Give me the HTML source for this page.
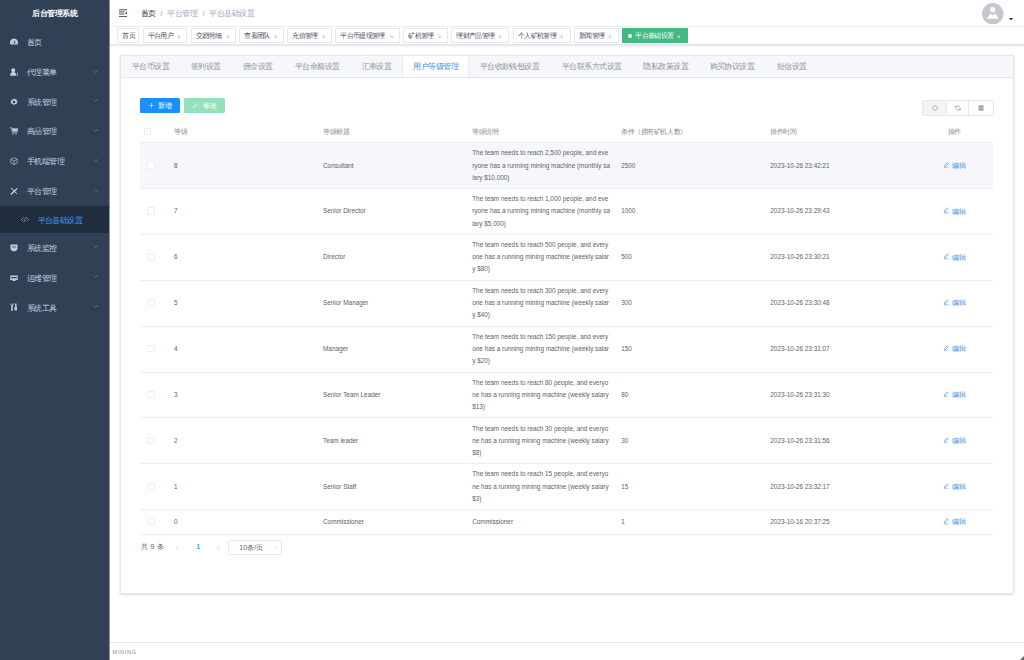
<!DOCTYPE html>
<html><head><meta charset="utf-8">
<style>
*{box-sizing:border-box;margin:0;padding:0}
html,body{width:1024px;height:660px;overflow:hidden;background:#fff}
body{font-family:"Liberation Sans",sans-serif;position:relative}
.abs{position:absolute;white-space:nowrap;line-height:0}
#side{position:absolute;left:0;top:0;width:109px;height:660px;background:#304156;box-shadow:1px 0 0 rgba(48,65,86,.55)}
#side .title{position:absolute;left:0;width:109.5px;top:5.5px;height:15px;line-height:15px;text-align:center;color:#fff;font-weight:bold;font-size:8px;letter-spacing:-0.53px}
.mi{position:absolute;left:0;width:109.5px;height:29.87px;line-height:29.87px;color:#ccd5e0;font-size:8px;letter-spacing:-0.53px}
.mi .t{position:absolute;left:26.7px;top:0.6px}
.mi .ic{position:absolute;left:10px;top:10.4px;width:8px;height:8px;line-height:0}
.mi .ar{position:absolute;left:92.8px;top:12.1px;width:5px;height:3px;line-height:0}
.sub{position:absolute;left:0;width:109px;top:205.7px;height:27.3px;background:#1f2d3d;color:#409eff;font-size:8px;letter-spacing:-0.53px;line-height:27.3px}
.sub .sic{position:absolute;left:21.3px;top:11.3px;line-height:0}
.sub .st{position:absolute;left:37.5px;top:0.9px}
#nav{position:absolute;left:109.5px;top:0;width:914.5px;height:27px;background:#fff;border-bottom:1px solid #f0f1f3;box-shadow:0 1px 2px rgba(0,21,41,.12)}
#tags{position:absolute;left:109.5px;top:26.7px;width:914.5px;height:18.1px;background:#fff;border-bottom:1px solid #e3e5e8;box-shadow:0 1px 2px 0 rgba(0,0,0,.10),0 0 2px 0 rgba(0,0,0,.04)}
.bc{position:absolute;top:7.6px;height:12px;line-height:12px;font-size:8px;letter-spacing:-0.53px;color:#97a8be;white-space:nowrap}
.bc.sep{color:#c0c4cc;font-weight:bold}
.tag{position:absolute;top:28.3px;height:14.3px;line-height:13px;border:1px solid #e8eaee;color:#495060;background:#fff;font-size:6.9px;letter-spacing:-0.65px;padding-left:4px;white-space:nowrap}
.tag .x{position:absolute;right:6.3px;top:5.4px;line-height:0}
.tag.act{background:#42b983;border-color:#42b983;color:#fff}
.tag .dot{position:absolute;left:4.5px;top:4.8px;width:4.3px;height:4.3px;border-radius:50%;background:#fff}
#card{position:absolute;left:120.3px;top:55.2px;width:893.5px;height:538.8px;background:#fff;border:1px solid #e4e7ed;box-shadow:0 1px 2px 0 rgba(0,0,0,.12),0 0 3px 0 rgba(0,0,0,.04)}
#tabh{position:absolute;left:0;top:0;width:100%;height:21.4px;background:#f5f7fa;border-bottom:0.55px solid #e4e7ed}
.tab{position:absolute;top:56.6px;height:20.6px;line-height:20.6px;font-size:8px;letter-spacing:-0.53px;color:#909399;white-space:nowrap}
.tab.act{color:#3a8ee6}
.tabact{position:absolute;top:56px;height:21.2px;background:#fff;border-left:1px solid #eaecf0;border-right:1px solid #eaecf0}
.btn{position:absolute;border-radius:1.6px;color:#fff;font-size:6.9px;letter-spacing:-0.45px;line-height:15px;white-space:nowrap}
.btn.pri{background:#1890ff}
.btn.suc{background:#94e1bb}
.tools{position:absolute;left:922.2px;top:100px;width:71.4px;height:15.8px;border:1px solid #e4e7ed;border-radius:1.6px;background:#fff}
.tb{position:absolute;top:0;height:14px;line-height:0}
.tb svg{position:absolute;top:4.2px}
.t1{left:0;width:23.6px;background:#f4f4f5;border-right:1px solid #e4e7ed}
.t1 svg{left:8.8px}
.t2{left:23.6px;width:22.7px;border-right:1px solid #e4e7ed}
.t2 svg{left:8.3px}
.t3{left:46.3px;width:24.5px}
.t3 svg{left:9px}
.cell{position:absolute;font-size:6.4px;line-height:12.2px;color:#606266;white-space:nowrap}
.hd{color:#8a8d93;font-weight:normal;font-size:6.9px;letter-spacing:-0.45px}
.hline{position:absolute;left:139.7px;width:853.5px;height:0.55px;background:#ebeef5}
.hover{position:absolute;left:139.7px;width:853.5px;background:#f5f7fa}
.cb{position:absolute;left:144.6px;width:7.4px;height:7.4px;border:1px solid #eceef1;border-radius:1px;background:#fff}
.edit{position:absolute;left:943.6px;width:24px;height:12.2px;font-size:6.9px;line-height:12.2px;color:#3a8ee6;white-space:nowrap}
.sel{position:absolute;border:1px solid #e6e8ec;border-radius:1.6px;font-size:7.2px;line-height:12.2px;color:#606266;white-space:nowrap}
.footer{position:absolute;left:109.5px;top:642.2px;width:914.5px;height:0.6px;background:#e6e6e6}

</style></head><body>
<div id="side">
<div class="title">后台管理系统</div>
<div class="mi" style="top:27.56px">
<div class="ic"><svg viewBox="0 0 16 16" width="8" height="8"><path d="M1 13A8 8 0 1 1 15 13Z" fill="#c6d0dc"/><path d="M8 12.5L9.8 5" stroke="#304156" stroke-width="1.6"/><path d="M3.5 9h2M10.5 9h2" stroke="#304156" stroke-width="1"/></svg></div><div class="t">首页</div>
</div>
<div class="mi" style="top:57.56px">
<div class="ic"><svg viewBox="0 0 16 16" width="8" height="8"><circle cx="6.5" cy="4.6" r="4" fill="#c6d0dc"/><path d="M0.3 15.5C0.3 11 2.5 8.2 6.5 8.2S12.7 11 12.7 15.5z" fill="#c6d0dc"/><path d="M13.2 6l1.8 3.5-0.8 6h1.6l0.2-6z" fill="#c6d0dc"/></svg></div><div class="t">代理菜单</div>
<div class="ar"><svg viewBox="0 0 10 6" width="5" height="3"><path d="M0.5 0.5L5 5 9.5 0.5" fill="none" stroke="#8796a8" stroke-width="1"/></svg></div>
</div>
<div class="mi" style="top:87.16px">
<div class="ic"><svg viewBox="0 0 16 16" width="8" height="8"><path d="M8 0.5l2 2.2 3-.4.4 3 2.2 2-2.2 2.2-.4 3-3-.4-2 2.2-2-2.2-3 .4-.4-3L.5 8l2.2-2 .4-3 3 .4z" fill="#bfcbd9"/><circle cx="8" cy="8" r="2.6" fill="#304156"/></svg></div><div class="t">系统管理</div>
<div class="ar"><svg viewBox="0 0 10 6" width="5" height="3"><path d="M0.5 0.5L5 5 9.5 0.5" fill="none" stroke="#8796a8" stroke-width="1"/></svg></div>
</div>
<div class="mi" style="top:116.87px">
<div class="ic"><svg viewBox="0 0 16 16" width="8" height="8"><path d="M0 1.5h3l2 9h8.5l2-7H4" fill="none" stroke="#bfcbd9" stroke-width="1.8"/><path d="M4.5 4h10l-1.6 5H5.5z" fill="#bfcbd9"/><circle cx="6" cy="14" r="1.5" fill="#bfcbd9"/><circle cx="12" cy="14" r="1.5" fill="#bfcbd9"/></svg></div><div class="t">商品管理</div>
<div class="ar"><svg viewBox="0 0 10 6" width="5" height="3"><path d="M0.5 0.5L5 5 9.5 0.5" fill="none" stroke="#8796a8" stroke-width="1"/></svg></div>
</div>
<div class="mi" style="top:146.76px">
<div class="ic"><svg viewBox="0 0 16 16" width="8" height="8"><path d="M8 1l6.5 3.5v7L8 15 1.5 11.5v-7z M1.5 4.5L8 8l6.5-3.5M8 8v7" fill="none" stroke="#bfcbd9" stroke-width="1.3"/></svg></div><div class="t">手机端管理</div>
<div class="ar"><svg viewBox="0 0 10 6" width="5" height="3"><path d="M0.5 0.5L5 5 9.5 0.5" fill="none" stroke="#8796a8" stroke-width="1"/></svg></div>
</div>
<div class="mi" style="top:176.66px">
<div class="ic"><svg viewBox="0 0 16 16" width="8" height="8"><path d="M2.5 14.5L14 3" stroke="#c6d0dc" stroke-width="2.8"/><path d="M1 15.5l1-3 2 2z" fill="#c6d0dc"/><path d="M2.5 2.5l11 11" stroke="#c6d0dc" stroke-width="2.4" stroke-dasharray="2 0.8"/></svg></div><div class="t">平台管理</div>
<div class="ar"><svg viewBox="0 0 10 6" width="5" height="3"><path d="M0.5 5.5L5 1 9.5 5.5" fill="none" stroke="#8796a8" stroke-width="1"/></svg></div>
</div>
<div class="sub"><div class="sic"><svg viewBox="0 0 16 10" width="8" height="5"><path d="M5 1L1 5l4 4M11 1l4 4-4 4M9.5 0.5L6.5 9.5" fill="none" stroke="#bfcbd9" stroke-width="1.1"/></svg></div><div class="st">平台基础设置</div></div>
<div class="mi" style="top:233.26px">
<div class="ic"><svg viewBox="0 0 16 16" width="8" height="8"><path d="M1 1h14v8c0 3-3 5-7 6-4-1-7-3-7-6z" fill="#bfcbd9"/><path d="M4 6h8" stroke="#304156" stroke-width="1.5"/></svg></div><div class="t">系统监控</div>
<div class="ar"><svg viewBox="0 0 10 6" width="5" height="3"><path d="M0.5 0.5L5 5 9.5 0.5" fill="none" stroke="#8796a8" stroke-width="1"/></svg></div>
</div>
<div class="mi" style="top:263.26px">
<div class="ic"><svg viewBox="0 0 16 16" width="8" height="8"><rect x="0.5" y="3" width="15" height="9" fill="#bfcbd9"/><rect x="2.5" y="6" width="11" height="2.5" fill="#304156"/><rect x="5" y="12" width="6" height="2" fill="#bfcbd9"/></svg></div><div class="t">运维管理</div>
<div class="ar"><svg viewBox="0 0 10 6" width="5" height="3"><path d="M0.5 0.5L5 5 9.5 0.5" fill="none" stroke="#8796a8" stroke-width="1"/></svg></div>
</div>
<div class="mi" style="top:293.06px">
<div class="ic"><svg viewBox="0 0 16 16" width="8" height="8"><path d="M1 1l2 5v9h2V6l2-5M5 1v4" stroke="#bfcbd9" stroke-width="1.6" fill="none"/><rect x="10" y="1" width="3" height="6" fill="#bfcbd9"/><rect x="9" y="7" width="5" height="8" rx="1" fill="#bfcbd9"/></svg></div><div class="t">系统工具</div>
<div class="ar"><svg viewBox="0 0 10 6" width="5" height="3"><path d="M0.5 0.5L5 5 9.5 0.5" fill="none" stroke="#8796a8" stroke-width="1"/></svg></div>
</div>
</div>
<div id="nav"></div>
<div id="tags"></div>
<div class="abs" style="left:118.6px;top:8.6px"><svg viewBox="0 0 17 17" width="8.5" height="8.5"><path d="M0 1.6h17M0 5.8h11M0 10h11M0 15.2h17" stroke="#3a3c40" stroke-width="1.8"/><path d="M17 4.5v7.5l-4.6-3.75z" fill="#3a3c40"/></svg></div>
<div class="bc" style="left:140.8px;color:#303133">首页</div>
<div class="bc sep" style="left:160.2px">/</div>
<div class="bc" style="left:167.1px">平台管理</div>
<div class="bc sep" style="left:202.4px">/</div>
<div class="bc" style="left:209.3px">平台基础设置</div>
<div class="abs" style="left:982.2px;top:2.7px"><svg viewBox="0 0 40 40" width="21.5" height="21.5"><circle cx="20" cy="20" r="20" fill="#c5c7cf"/><circle cx="20" cy="12.3" r="5" fill="#fff"/><path d="M9 29.5L15.5 19.5 20 23 24.5 19.5 31 29.5z" fill="#fff"/></svg></div>
<div class="abs" style="left:1009.4px;top:15.3px"><svg viewBox="0 0 8 5" width="4" height="2.5"><path d="M0 0h8L4 5z" fill="#303133"/></svg></div>
<div class="tag" style="left:117.4px;width:22.1px;">首页</div>
<div class="tag" style="left:142.5px;width:44.8px;">平台用户<span class="x"><svg viewBox="0 0 6 6" width="3.4" height="3.4"><path d="M0.8 0.8L5.2 5.2M5.2 0.8L0.8 5.2" stroke="#a3a7ae" stroke-width="1.2" fill="none"/></svg></span></div>
<div class="tag" style="left:190.8px;width:45.4px;">交易明细<span class="x"><svg viewBox="0 0 6 6" width="3.4" height="3.4"><path d="M0.8 0.8L5.2 5.2M5.2 0.8L0.8 5.2" stroke="#a3a7ae" stroke-width="1.2" fill="none"/></svg></span></div>
<div class="tag" style="left:239.2px;width:45.1px;">查看团队<span class="x"><svg viewBox="0 0 6 6" width="3.4" height="3.4"><path d="M0.8 0.8L5.2 5.2M5.2 0.8L0.8 5.2" stroke="#a3a7ae" stroke-width="1.2" fill="none"/></svg></span></div>
<div class="tag" style="left:287.4px;width:45.0px;">充值管理<span class="x"><svg viewBox="0 0 6 6" width="3.4" height="3.4"><path d="M0.8 0.8L5.2 5.2M5.2 0.8L0.8 5.2" stroke="#a3a7ae" stroke-width="1.2" fill="none"/></svg></span></div>
<div class="tag" style="left:335.4px;width:65.0px;">平台币提现管理<span class="x"><svg viewBox="0 0 6 6" width="3.4" height="3.4"><path d="M0.8 0.8L5.2 5.2M5.2 0.8L0.8 5.2" stroke="#a3a7ae" stroke-width="1.2" fill="none"/></svg></span></div>
<div class="tag" style="left:403.4px;width:45.0px;">矿机管理<span class="x"><svg viewBox="0 0 6 6" width="3.4" height="3.4"><path d="M0.8 0.8L5.2 5.2M5.2 0.8L0.8 5.2" stroke="#a3a7ae" stroke-width="1.2" fill="none"/></svg></span></div>
<div class="tag" style="left:451.4px;width:57.7px;">理财产品管理<span class="x"><svg viewBox="0 0 6 6" width="3.4" height="3.4"><path d="M0.8 0.8L5.2 5.2M5.2 0.8L0.8 5.2" stroke="#a3a7ae" stroke-width="1.2" fill="none"/></svg></span></div>
<div class="tag" style="left:512.9px;width:57.9px;">个人矿机管理<span class="x"><svg viewBox="0 0 6 6" width="3.4" height="3.4"><path d="M0.8 0.8L5.2 5.2M5.2 0.8L0.8 5.2" stroke="#a3a7ae" stroke-width="1.2" fill="none"/></svg></span></div>
<div class="tag" style="left:574px;width:45.0px;">新闻管理<span class="x"><svg viewBox="0 0 6 6" width="3.4" height="3.4"><path d="M0.8 0.8L5.2 5.2M5.2 0.8L0.8 5.2" stroke="#a3a7ae" stroke-width="1.2" fill="none"/></svg></span></div>
<div class="tag act" style="left:622px;width:65.6px;padding-left:12.2px;"><span class="dot"></span>平台基础设置<span class="x"><svg viewBox="0 0 6 6" width="3.4" height="3.4"><path d="M0.8 0.8L5.2 5.2M5.2 0.8L0.8 5.2" stroke="#fff" stroke-width="1.2" fill="none"/></svg></span></div>
<div id="card"><div id="tabh"></div></div>
<div class="tab" style="left:132px">平台币设置</div>
<div class="tab" style="left:190.8px">签到设置</div>
<div class="tab" style="left:242.7px">佣金设置</div>
<div class="tab" style="left:295px">平台余额设置</div>
<div class="tab" style="left:361.5px">汇率设置</div>
<div class="tabact" style="left:401.6px;width:67px"></div>
<div class="tab act" style="left:413.2px">用户等级管理</div>
<div class="tab" style="left:479.6px">平台收款钱包设置</div>
<div class="tab" style="left:561.9px">平台联系方式设置</div>
<div class="tab" style="left:643.4px">隐私政策设置</div>
<div class="tab" style="left:709.5px">购买协议设置</div>
<div class="tab" style="left:776.8px">短信设置</div>
<div class="btn pri" style="left:139.5px;top:97.6px;width:40.8px;height:15px"><svg viewBox="0 0 10 10" width="5" height="5" style="position:absolute;left:9px;top:5px"><path d="M5 0v10M0 5h10" stroke="#fff" stroke-width="1.1"/></svg><span style="position:absolute;left:18.7px">新增</span></div>
<div class="btn suc" style="left:184.2px;top:97.6px;width:40.9px;height:15px"><svg viewBox="0 0 10 10" width="5" height="5" style="position:absolute;left:8.5px;top:5px"><path d="M1 9l1-3 5-5 2 2-5 5z" fill="none" stroke="#fff" stroke-width="1"/></svg><span style="position:absolute;left:18.9px">修改</span></div>
<div class="tools"><div class="tb t1"><svg viewBox="0 0 12 12" width="6" height="6"><circle cx="6" cy="6" r="4.6" fill="none" stroke="#7d8086" stroke-width="1"/></svg></div><div class="tb t2"><svg viewBox="0 0 12 12" width="6" height="6"><path d="M10.2 4.5A4.6 4.6 0 0 0 2 3.8M1.8 7.5A4.6 4.6 0 0 0 10 8.2" fill="none" stroke="#6d7076" stroke-width="1.1"/><path d="M1.2 1.5v3h3M10.8 10.5v-3h-3" fill="none" stroke="#6d7076" stroke-width="1"/></svg></div><div class="tb t3"><svg viewBox="0 0 12 12" width="6" height="6"><path d="M1 2.2h10M1 6h10M1 9.8h10" stroke="#505256" stroke-width="1.8"/></svg></div></div>
<div class="cb" style="left:144px;top:127.70px"></div>
<div class="cell hd" style="left:174px;top:126.00px">等级</div>
<div class="cell hd" style="left:323px;top:126.00px">等级标题</div>
<div class="cell hd" style="left:472.2px;top:126.00px">等级说明</div>
<div class="cell hd" style="left:621.2px;top:126.00px">条件（拥有矿机人数）</div>
<div class="cell hd" style="left:770.3px;top:126.00px">操作时间</div>
<div class="cell hd" style="left:947.5px;top:126.00px">操作</div>
<div class="hline" style="top:141.9px"></div>
<div class="hover" style="top:142.50px;height:45.57px"></div>
<div class="cb" style="left:147.2px;top:161.44px"></div>
<div class="cell" style="left:174px;top:159.53px">8</div>
<div class="cell" style="left:323px;top:159.53px">Consultant</div>
<div class="cell desc" style="left:472.2px;top:147.34px">The team needs to reach 2,500 people, and eve<br>ryone has a running mining machine (monthly sa<br>lary &#36;10,000)</div>
<div class="cell" style="left:621.2px;top:159.53px">2500</div>
<div class="cell" style="left:770.3px;top:159.53px">2023-10-26 23:42:21</div>
<div class="edit" style="top:159.53px"><svg viewBox="0 0 12 12" width="6.4" height="6.4" style="position:absolute;left:-0.4px;top:2px"><path d="M2.2 9.2l.6-2.6L8 1.4l2 2-5.2 5.2z" fill="none" stroke="#3a8ee6" stroke-width="1.1"/><path d="M1.5 11h9" stroke="#3a8ee6" stroke-width="1.1"/></svg><span style="position:absolute;left:8.1px;top:0.3px">编辑</span></div>
<div class="cb" style="left:147.2px;top:207.31px"></div>
<div class="cell" style="left:174px;top:205.41px">7</div>
<div class="cell" style="left:323px;top:205.41px">Senior Director</div>
<div class="cell desc" style="left:472.2px;top:193.21px">The team needs to reach 1,000 people, and eve<br>ryone has a running mining machine (monthly sa<br>lary &#36;5,000)</div>
<div class="cell" style="left:621.2px;top:205.41px">1000</div>
<div class="cell" style="left:770.3px;top:205.41px">2023-10-26 23:29:43</div>
<div class="edit" style="top:205.41px"><svg viewBox="0 0 12 12" width="6.4" height="6.4" style="position:absolute;left:-0.4px;top:2px"><path d="M2.2 9.2l.6-2.6L8 1.4l2 2-5.2 5.2z" fill="none" stroke="#3a8ee6" stroke-width="1.1"/><path d="M1.5 11h9" stroke="#3a8ee6" stroke-width="1.1"/></svg><span style="position:absolute;left:8.1px;top:0.3px">编辑</span></div>
<div class="hline" style="top:188.07px"></div>
<div class="cb" style="left:147.2px;top:253.18px"></div>
<div class="cell" style="left:174px;top:251.28px">6</div>
<div class="cell" style="left:323px;top:251.28px">Director</div>
<div class="cell desc" style="left:472.2px;top:239.08px">The team needs to reach 500 people, and every<br>one has a running mining machine (weekly salar<br>y &#36;80)</div>
<div class="cell" style="left:621.2px;top:251.28px">500</div>
<div class="cell" style="left:770.3px;top:251.28px">2023-10-26 23:30:21</div>
<div class="edit" style="top:251.28px"><svg viewBox="0 0 12 12" width="6.4" height="6.4" style="position:absolute;left:-0.4px;top:2px"><path d="M2.2 9.2l.6-2.6L8 1.4l2 2-5.2 5.2z" fill="none" stroke="#3a8ee6" stroke-width="1.1"/><path d="M1.5 11h9" stroke="#3a8ee6" stroke-width="1.1"/></svg><span style="position:absolute;left:8.1px;top:0.3px">编辑</span></div>
<div class="hline" style="top:233.94px"></div>
<div class="cb" style="left:147.2px;top:299.04px"></div>
<div class="cell" style="left:174px;top:297.14px">5</div>
<div class="cell" style="left:323px;top:297.14px">Senior Manager</div>
<div class="cell desc" style="left:472.2px;top:284.94px">The team needs to reach 300 people, and every<br>one has a running mining machine (weekly salar<br>y &#36;40)</div>
<div class="cell" style="left:621.2px;top:297.14px">300</div>
<div class="cell" style="left:770.3px;top:297.14px">2023-10-26 23:30:48</div>
<div class="edit" style="top:297.14px"><svg viewBox="0 0 12 12" width="6.4" height="6.4" style="position:absolute;left:-0.4px;top:2px"><path d="M2.2 9.2l.6-2.6L8 1.4l2 2-5.2 5.2z" fill="none" stroke="#3a8ee6" stroke-width="1.1"/><path d="M1.5 11h9" stroke="#3a8ee6" stroke-width="1.1"/></svg><span style="position:absolute;left:8.1px;top:0.3px">编辑</span></div>
<div class="hline" style="top:279.81px"></div>
<div class="cb" style="left:147.2px;top:344.91px"></div>
<div class="cell" style="left:174px;top:343.01px">4</div>
<div class="cell" style="left:323px;top:343.01px">Manager</div>
<div class="cell desc" style="left:472.2px;top:330.81px">The team needs to reach 150 people, and every<br>one has a running mining machine (weekly salar<br>y &#36;20)</div>
<div class="cell" style="left:621.2px;top:343.01px">150</div>
<div class="cell" style="left:770.3px;top:343.01px">2023-10-26 23:31:07</div>
<div class="edit" style="top:343.01px"><svg viewBox="0 0 12 12" width="6.4" height="6.4" style="position:absolute;left:-0.4px;top:2px"><path d="M2.2 9.2l.6-2.6L8 1.4l2 2-5.2 5.2z" fill="none" stroke="#3a8ee6" stroke-width="1.1"/><path d="M1.5 11h9" stroke="#3a8ee6" stroke-width="1.1"/></svg><span style="position:absolute;left:8.1px;top:0.3px">编辑</span></div>
<div class="hline" style="top:325.68px"></div>
<div class="cb" style="left:147.2px;top:390.78px"></div>
<div class="cell" style="left:174px;top:388.88px">3</div>
<div class="cell" style="left:323px;top:388.88px">Senior Team Leader</div>
<div class="cell desc" style="left:472.2px;top:376.68px">The team needs to reach 80 people, and everyo<br>ne has a running mining machine (weekly salary<br>&#36;13)</div>
<div class="cell" style="left:621.2px;top:388.88px">80</div>
<div class="cell" style="left:770.3px;top:388.88px">2023-10-26 23:31:30</div>
<div class="edit" style="top:388.88px"><svg viewBox="0 0 12 12" width="6.4" height="6.4" style="position:absolute;left:-0.4px;top:2px"><path d="M2.2 9.2l.6-2.6L8 1.4l2 2-5.2 5.2z" fill="none" stroke="#3a8ee6" stroke-width="1.1"/><path d="M1.5 11h9" stroke="#3a8ee6" stroke-width="1.1"/></svg><span style="position:absolute;left:8.1px;top:0.3px">编辑</span></div>
<div class="hline" style="top:371.55px"></div>
<div class="cb" style="left:147.2px;top:436.65px"></div>
<div class="cell" style="left:174px;top:434.75px">2</div>
<div class="cell" style="left:323px;top:434.75px">Team leader</div>
<div class="cell desc" style="left:472.2px;top:422.55px">The team needs to reach 30 people, and everyo<br>ne has a running mining machine (weekly salary<br>&#36;8)</div>
<div class="cell" style="left:621.2px;top:434.75px">30</div>
<div class="cell" style="left:770.3px;top:434.75px">2023-10-26 23:31:56</div>
<div class="edit" style="top:434.75px"><svg viewBox="0 0 12 12" width="6.4" height="6.4" style="position:absolute;left:-0.4px;top:2px"><path d="M2.2 9.2l.6-2.6L8 1.4l2 2-5.2 5.2z" fill="none" stroke="#3a8ee6" stroke-width="1.1"/><path d="M1.5 11h9" stroke="#3a8ee6" stroke-width="1.1"/></svg><span style="position:absolute;left:8.1px;top:0.3px">编辑</span></div>
<div class="hline" style="top:417.42px"></div>
<div class="cb" style="left:147.2px;top:482.52px"></div>
<div class="cell" style="left:174px;top:480.62px">1</div>
<div class="cell" style="left:323px;top:480.62px">Senior Staff</div>
<div class="cell desc" style="left:472.2px;top:468.42px">The team needs to reach 15 people, and everyo<br>ne has a running mining machine (weekly salary<br>&#36;3)</div>
<div class="cell" style="left:621.2px;top:480.62px">15</div>
<div class="cell" style="left:770.3px;top:480.62px">2023-10-26 23:32:17</div>
<div class="edit" style="top:480.62px"><svg viewBox="0 0 12 12" width="6.4" height="6.4" style="position:absolute;left:-0.4px;top:2px"><path d="M2.2 9.2l.6-2.6L8 1.4l2 2-5.2 5.2z" fill="none" stroke="#3a8ee6" stroke-width="1.1"/><path d="M1.5 11h9" stroke="#3a8ee6" stroke-width="1.1"/></svg><span style="position:absolute;left:8.1px;top:0.3px">编辑</span></div>
<div class="hline" style="top:463.29px"></div>
<div class="hline" style="top:509.16px"></div>
<div class="cb" style="left:147.2px;top:518.08px"></div>
<div class="cell" style="left:174px;top:516.18px">0</div>
<div class="cell" style="left:323px;top:516.18px">Commissioner</div>
<div class="cell" style="left:472.2px;top:516.18px">Commissioner</div>
<div class="cell" style="left:621.2px;top:516.18px">1</div>
<div class="cell" style="left:770.3px;top:516.18px">2023-10-16 20:37:25</div>
<div class="edit" style="top:516.18px"><svg viewBox="0 0 12 12" width="6.4" height="6.4" style="position:absolute;left:-0.4px;top:2px"><path d="M2.2 9.2l.6-2.6L8 1.4l2 2-5.2 5.2z" fill="none" stroke="#3a8ee6" stroke-width="1.1"/><path d="M1.5 11h9" stroke="#3a8ee6" stroke-width="1.1"/></svg><span style="position:absolute;left:8.1px;top:0.3px">编辑</span></div>
<div class="hline" style="top:534.1px"></div>
<div class="cell" style="left:141.3px;top:541px;color:#606266;font-size:7.4px">共 9 条</div>
<div class="abs" style="left:175.5px;top:544.5px"><svg viewBox="0 0 6 10" width="3" height="5"><path d="M5 0.5L1 5l4 4.5" fill="none" stroke="#b4b8bf" stroke-width="1"/></svg></div>
<div class="cell" style="left:196.5px;top:541px;color:#409eff;font-weight:bold">1</div>
<div class="abs" style="left:216.6px;top:544.5px"><svg viewBox="0 0 6 10" width="3" height="5"><path d="M1 0.5L5 5l-4 4.5" fill="none" stroke="#b4b8bf" stroke-width="1"/></svg></div>
<div class="sel" style="left:228.4px;top:540.2px;width:53.2px;height:15px"><span style="position:absolute;left:9.8px;top:1px">10条/页</span><svg viewBox="0 0 10 6" width="4" height="2.4" style="position:absolute;left:45px;top:5px"><path d="M0.5 0.5L5 5 9.5 0.5" fill="none" stroke="#c0c4cc" stroke-width="1"/></svg></div>
<div class="footer"></div>
<div class="abs" style="left:112.6px;top:652.2px;font-size:5.6px;color:#8c8c8c;letter-spacing:0.65px">MINING</div>
<div class="abs" style="left:1020px;top:656px;width:0;height:0;border-left:4px solid transparent;border-bottom:4px solid #666"></div>
</body></html>
